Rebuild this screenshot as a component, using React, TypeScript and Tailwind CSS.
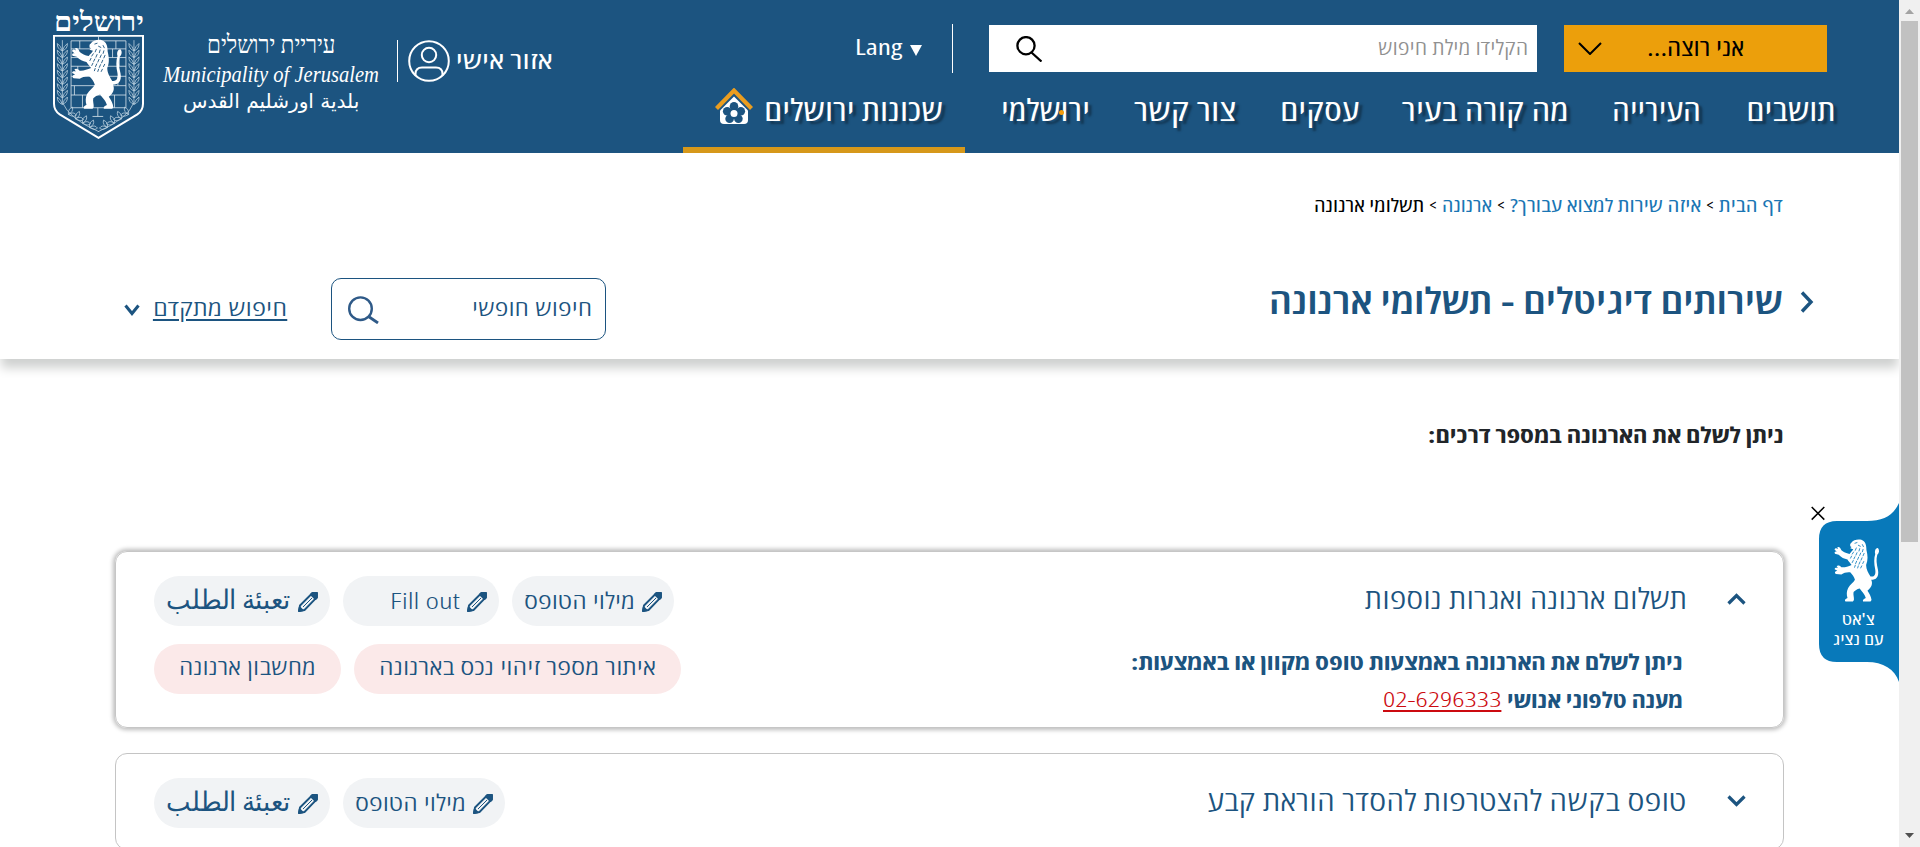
import { useLayoutEffect, useRef, useState } from "react";
import type { ReactNode } from "react";
import { clsx } from "clsx";

/* One line of text that is condensed or widened to fill the width of its box;
   the glyphs' side bearings hang one pixel outside on either side. */
function Line({ className, children, dir = "rtl" }: { className?: string; children: ReactNode; dir?: "rtl" | "ltr" }) {
  const box = useRef<HTMLSpanElement>(null);
  const text = useRef<HTMLSpanElement>(null);
  const [scale, setScale] = useState(1);
  useLayoutEffect(() => {
    if (box.current && text.current) {
      setScale((box.current.clientWidth + 2) / text.current.offsetWidth);
    }
  }, []);
  return (
    <span ref={box} dir={dir} className={clsx("flex shrink-0 justify-start whitespace-nowrap", className)}>
      <span
        ref={text}
        className={clsx("shrink-0", dir === "rtl" ? "-mr-px origin-right" : "-ml-px origin-left")}
        style={{ transform: `scaleX(${scale})` }}
      >
        {children}
      </span>
    </span>
  );
}

const LION =
  "M104 42 L108 38 C112 30 128 27 137 30 C149 34 152 46 152 60 C156 76 157 90 151 104 C151 118 158 128 164 138 C176 140 180 132 178 118 C174 100 174 84 178 72 C175 62 180 53 186 54 C191 60 190 68 184 74 C180 88 182 100 186 118 C190 140 180 148 166 148 C172 160 166 172 155 180 C160 188 166 196 167 208 L164 212 L142 212 C140 208 144 204 150 202 C148 192 138 182 132 174 C124 176 118 180 114 184 C112 192 116 200 115 208 L112 212 L90 212 C86 208 90 204 96 202 C93 192 93 182 98 172 C104 162 114 156 118 148 C116 140 110 132 104 126 C92 125 86 128 78 132 L62 131 C56 127 60 122 66 121 L58 117 C58 112 64 112 68 113 L64 108 C67 104 74 106 78 111 C88 112 98 108 108 104 C104 98 98 92 96 88 C86 86 78 82 70 74 L59 71 C56 66 60 63 65 65 L58 59 C58 54 63 53 68 57 L66 52 C70 49 75 52 78 61 C84 66 92 70 102 72 C106 66 110 64 113 58 L104 55 L108 51 L104 49 Z";

const MANE =
  "M118 40 l6 -2 M128 46 l6 3 M140 44 l3 6 M122 54 l-3 7 M132 56 l-2 7 M142 58 l-2 7 M114 66 l-4 6 M124 68 l-3 7 M135 69 l-3 7 M145 70 l-3 7 M108 78 l-3 6 M118 80 l-3 6 M129 81 l-3 7 M139 83 l-3 7 M113 91 l-3 6 M123 93 l-3 7 M133 95 l-3 7 M144 94 l-3 6 M119 105 l-2 6 M128 107 l-2 6 M138 107 l-3 6";

function Lion({ ink }: { ink: string }) {
  return (
    <>
      <path d={LION} fill="#fff" />
      <path d={MANE} fill="none" stroke={ink} strokeWidth="2.4" strokeLinecap="round" />
    </>
  );
}

const LEAVES = [128, 148, 168, 188, 208, 228, 248, 268, 288];

function Shield() {
  return (
    <svg viewBox="12 95 272 310" className="h-[104px] w-[91px]">
      <path d="M15 97H281V300Q281 320 264 332L148 402L32 332Q15 320 15 300Z" fill="#1c5480" stroke="#fff" strokeWidth="6" />
      <g fill="none" stroke="#dbe6ee" strokeWidth="2.4">
        <path d="M66 112H230M66 136H230M66 162H230M66 188H230M66 218H230M66 246H230M66 274H230M66 312H230M66 112V312M230 112V312M92 112V136M148 97V112M200 112V136M190 136V162M210 162V188M86 188V218M206 218V246M76 246V274M100 274V312M196 274V312M180 246V274M146 312V338M130 338H162" />
      </g>
      <g fill="none" stroke="#b9cfdf" strokeWidth="2.4">
        <path d="M40 110V296Q60 345 150 384M254 110V296Q236 345 146 384" />
        {LEAVES.map((y) => (
          <g key={y}>
            <path d={`M40 ${y + 14}Q24 ${y + 8} 25 ${y - 8}Q36 ${y} 40 ${y + 14}Q56 ${y + 8} 55 ${y - 8}Q44 ${y} 40 ${y + 14}`} />
            <path d={`M254 ${y + 14}Q238 ${y + 8} 239 ${y - 8}Q250 ${y} 254 ${y + 14}Q270 ${y + 8} 269 ${y - 8}Q258 ${y} 254 ${y + 14}`} />
          </g>
        ))}
        {[0, 1, 2, 3].map((i) => (
          <g key={i}>
            <path d={`M${58 + i * 21} ${332 + i * 13}q-2 -16 12 -22q4 14 -12 22q16 10 24 2q-8 -12 -24 -2`} />
            <path d={`M${238 - i * 21} ${332 + i * 13}q2 -16 -12 -22q-4 14 12 22q-16 10 -24 2q8 -12 24 -2`} />
          </g>
        ))}
      </g>
      <g transform="translate(3.6 76.5) scale(1.13 1.125)">
        <Lion ink="#1c5480" />
      </g>
    </svg>
  );
}

function Pencil() {
  return (
    <svg viewBox="0 0 20 20" className="h-5 w-5 shrink-0" fill="none" stroke="#1c5480" strokeWidth="1.9" strokeLinejoin="round">
      <path d="M1 19L2 13.500L14 1.500L18.800 1L18.500 5.700L6.500 18Z" />
      <path d="M5 15L14 6" strokeWidth="1" />
      <path d="M13 2.500L17.500 7L19 5.500V1H14.500Z" fill="#1c5480" />
      <path d="M1 19L1.700 15.500L4.600 18.400Z" fill="#1c5480" />
    </svg>
  );
}

function Chevron({ d, box, className, width = 3 }: { d: string; box: string; className: string; width?: number }) {
  return (
    <svg viewBox={box} className={clsx("shrink-0", className)} fill="none" stroke="currentColor" strokeWidth={width}>
      <path d={d} />
    </svg>
  );
}

function FormPill({ label, className, textClass, dir = "rtl" }: { label: string; className: string; textClass: string; dir?: "rtl" | "ltr" }) {
  return (
    <a className={clsx("flex h-[50px] items-center justify-end gap-[8px] rounded-[25px] bg-[#f1f3f5] pr-[12px]", className)}>
      <Line dir={dir} className={textClass}>{label}</Line>
      <span className="pt-[2px]"><Pencil /></span>
    </a>
  );
}

const hebrewPill = "w-[109px] text-[23px] leading-[44px] pb-[3px] font-[350]";
const arabicPill = "w-[123px] text-[27px] leading-[40px] pb-[5px] font-light";

function NavItem({ label, className }: { label: string; className: string }) {
  return <Line className={clsx("pt-[15px] text-[30px] leading-[42px] [text-shadow:3px_3px_2px_rgba(0,0,0,0.38)]", className)}>{label}</Line>;
}

function Header() {
  return (
    <header className="flex h-[153px] bg-[#1c5480] text-white">
      <div className="flex w-[683px] shrink-0 pl-[53px]">
        <div className="flex w-[91px] flex-col items-center pt-[5px]">
          <Line className="w-[88px] font-['Liberation_Serif',serif] text-[27px] leading-[30px] font-bold"><span className="relative top-[2px]">ירושלים</span></Line>
          <Shield />
        </div>
        <div className="ml-[20px] flex w-[214px] flex-col items-center pt-[29px]">
          <Line className="w-[126px] font-['Liberation_Serif',serif] text-[25px] leading-[32px]">עיריית ירושלים</Line>
          <Line dir="ltr" className="w-[214px] font-['Liberation_Serif',serif] text-[24px] leading-[26px] italic">Municipality of Jerusalem</Line>
          <Line className="w-[174px] font-['DejaVu_Sans',sans-serif] text-[20px] leading-[28px]">بلدية اورشليم القدس</Line>
        </div>
        <div className="mt-[40px] ml-[19px] h-[42px] w-px bg-white" />
        <svg viewBox="0 0 42 42" className="mt-[40px] ml-[10px] h-[42px] w-[42px]" fill="none" stroke="#fff" strokeWidth="2">
          <circle cx="21" cy="21" r="19.8" />
          <circle cx="21" cy="15" r="7.2" />
          <path d="M7.5 35.5V34Q7.5 27.500 14 27.5H28Q34.500 27.500 34.500 34V35.5" />
        </svg>
        <Line className="mt-[42px] ml-[7px] w-[94px] text-[24px] leading-[36px] font-medium">אזור אישי</Line>
      </div>
      <div className="flex flex-1 flex-col">
        <div className="flex h-[74px] items-start pt-[25px]">
          <div className="ml-[173px] flex h-[45px] items-center gap-[8px]">
            <Line dir="ltr" className="w-[46px] pb-[3px] text-[22px] leading-[40px]">Lang</Line>
            <svg viewBox="0 0 12 11" className="mt-[6px] h-[11px] w-3" fill="#fff"><path d="M0 0H12L6 11Z" /></svg>
          </div>
          <div className="-mt-px ml-[30px] h-[49px] w-px bg-white" />
          <div className="ml-[36px] flex h-[47px] w-[548px] items-center justify-between bg-white pr-[10px] pl-[27px]">
            <svg viewBox="0 0 26 26" className="h-[26px] w-[26px]" fill="none" stroke="#000" strokeWidth="2.3">
              <circle cx="10" cy="9.700" r="8.600" />
              <path d="M15.500 16.500L25.500 25.500" />
            </svg>
            <Line className="w-[148px] pb-[4px] text-[21px] leading-[40px] font-light text-[#909090]">הקלידו מילת חיפוש</Line>
          </div>
          <div className="ml-[27px] flex h-[47px] w-[263px] items-center bg-[#ec9f0b] pl-[14px] text-black">
            <Chevron box="0 0 24 13" d="M1 1L12 12L23 1" className="h-[13px] w-6" width={2} />
            <Line className="ml-[46px] w-[95px] pb-[3px] text-[24px] leading-[40px]">אני רוצה...</Line>
          </div>
        </div>
        <nav className="flex h-[79px]">
          <div className="flex w-[282px] border-b-[6px] border-[#d6981a] pl-[32px]">
            <svg viewBox="0 0 38 36" className="mt-[14px] mr-[12px] h-[36px] w-[38px]">
              <path d="M19 8.500L33 22.500V32Q33 36 29 36H9Q5 36 5 32V22.500Z" fill="#fff" />
              <path d="M1.500 20.500L19 2.600L36.500 20.500" fill="none" stroke="#ea9d1f" strokeWidth="4.200" />
              <g fill="#1c5480">
                <circle cx="19" cy="18.400" r="4.300" />
                <circle cx="12.200" cy="23.200" r="4.300" />
                <circle cx="25.800" cy="23.200" r="4.300" />
                <circle cx="14.600" cy="30.800" r="4.300" />
                <circle cx="23.400" cy="30.800" r="4.300" />
                <circle cx="19" cy="25.500" r="5.500" />
              </g>
              <circle cx="19" cy="25.500" r="3.500" fill="#fff" />
            </svg>
            <NavItem label="שכונות ירושלים" className="w-[177px]" />
          </div>
          <div className="relative ml-[37px]">
            <NavItem label="ירושלמי" className="w-[87px]" />
            <span className="absolute top-[36px] left-[57px] h-[5px] w-[5px] rounded-full bg-[#f59c0b]" />
          </div>
          <NavItem label="צור קשר" className="ml-[46px] w-[100px]" />
          <NavItem label="עסקים" className="ml-[46px] w-[77px]" />
          <NavItem label="מה קורה בעיר" className="ml-[45px] w-[164px]" />
          <NavItem label="העירייה" className="ml-[46px] w-[87px]" />
          <NavItem label="תושבים" className="ml-[46px] w-[88px]" />
        </nav>
      </div>
    </header>
  );
}

function TitleBand() {
  return (
    <section className="relative h-[206px] bg-white pt-[40px] text-[#1c5480] shadow-[0_10px_10px_-1px_#cfd1d0]">
      <div dir="rtl" className="flex h-6 pr-[117px] text-[18.500px] leading-6">
        <Line className="w-[62px] text-[#1a76b4]">דף הבית</Line>
        <span className="w-[20px] text-center text-[16px] text-black">&gt;</span>
        <Line className="w-[189px] text-[#1a76b4]">איזה שירות למצוא עבורך?</Line>
        <span className="w-[20px] text-center text-[16px] text-black">&gt;</span>
        <Line className="w-[48px] text-[#1a76b4]">ארנונה</Line>
        <span className="w-[20px] text-center text-[16px] text-black">&gt;</span>
        <Line className="w-[108px] text-black">תשלומי ארנונה</Line>
      </div>
      <div className="mt-[61px] flex h-[62px] items-center pr-[85px] pl-[124px]">
        <Chevron box="0 0 16 12" d="M1.500 1.500L8 9.500L14.500 1.500" className="mt-[2px] mr-[14px] h-3 w-4" />
        <Line className="w-[132px] pb-[5px] text-[23px] leading-[40px] font-[350] underline decoration-2 underline-offset-[3px]">חיפוש מתקדם</Line>
        <div className="ml-[45px] flex h-[62px] w-[275px] items-center justify-between rounded-[10px] border border-[#1c5480] pr-[14px] pl-[16px]">
          <svg viewBox="0 0 31 28" className="mt-[2px] h-7 w-[31px]" fill="none" stroke="#2f5a88" strokeWidth="2.400">
            <circle cx="12.500" cy="12.700" r="11.300" />
            <path d="M20.500 20.500L30 27" strokeWidth="2.800" />
          </svg>
          <Line className="w-[118px] pb-[5px] text-[23px] leading-[40px] font-[350]">חיפוש חופשי</Line>
        </div>
        <h1 className="ml-auto self-start pt-[2px]">
          <Line className="w-[512px] text-[36px] leading-[42px] font-semibold">שירותים דיגיטלים - תשלומי ארנונה</Line>
        </h1>
        <Chevron box="0 0 14 22" d="M2 1.500L11 11L2 20.500" className="mt-[13px] ml-[18px] h-[22px] w-[14px] self-start" width={3.4} />
      </div>
    </section>
  );
}

function Services() {
  return (
    <main className="pt-[63px] pl-[115px] text-[#1c5480]">
      <p className="flex justify-end pr-[116px]">
        <Line className="w-[354px] text-[22px] leading-6 font-bold text-[#212529]">ניתן לשלם את הארנונה במספר דרכים:</Line>
      </p>
      <article className="mt-[105px] flex h-[177px] w-[1669px] justify-between rounded-[12px] border border-[#c6c6c6] pt-[24px] pr-[37px] pl-[38px] shadow-[0_0_4px_2px_#bdbdbd]">
        <div className="flex flex-col gap-[18px]">
          <div className="flex gap-[13px]">
            <FormPill label="تعبئة الطلب" className="w-[176px]" textClass={arabicPill} />
            <FormPill label="Fill out" dir="ltr" className="w-[156px]" textClass="w-[68px] text-[22px] leading-[44px] pb-[3px] font-[350]" />
            <FormPill label="מילוי הטופס" className="w-[162px]" textClass={hebrewPill} />
          </div>
          <div className="flex gap-[13px]">
            <a className="flex h-[50px] w-[187px] justify-center rounded-[25px] bg-[#fbe9e9]">
              <Line className="w-[135px] text-[23px] leading-[44px] font-[350]">מחשבון ארנונה</Line>
            </a>
            <a className="flex h-[50px] w-[327px] justify-center rounded-[25px] bg-[#fbe9e9]">
              <Line className="w-[275px] text-[23px] leading-[44px] font-[350]">איתור מספר זיהוי נכס בארנונה</Line>
            </a>
          </div>
        </div>
        <div className="flex flex-col items-end pt-[4px]">
          <div className="flex items-center gap-[41px]">
            <Line className="w-[320px] text-[29px] leading-[36px] font-light">תשלום ארנונה ואגרות נוספות</Line>
            <Chevron box="0 0 19 12" d="M1.500 10.500L9.500 2.500L17.500 10.500" className="mt-[1px] h-3 w-[19px]" width={3.2} />
          </div>
          <div className="mt-[26px] flex flex-col items-end pr-[64px] text-[22px] leading-[38px] font-bold">
            <Line className="w-[550px]">ניתן לשלם את הארנונה באמצעות טופס מקוון או באמצעות:</Line>
            <div className="flex">
              <Line dir="ltr" className="mr-[7px] w-[117px] text-[21px] font-light text-[#cc0a10] underline decoration-2 underline-offset-[3px]">02-6296333</Line>
              <Line className="w-[174px]">מענה טלפוני אנושי</Line>
            </div>
          </div>
        </div>
      </article>
      <article className="mt-[25px] flex h-[97px] w-[1669px] justify-between rounded-[12px] border border-[#c4c4c4] pt-[24px] pr-[37px] pl-[38px]">
        <div className="flex gap-[13px]">
          <FormPill label="تعبئة الطلب" className="w-[176px]" textClass={arabicPill} />
          <FormPill label="מילוי הטופס" className="w-[162px]" textClass={hebrewPill} />
        </div>
        <div className="flex h-[43px] items-center gap-[41px]">
          <Line className="w-[478px] text-[29px] leading-[36px] font-light">טופס בקשה להצטרפות להסדר הוראת קבע</Line>
          <Chevron box="0 0 19 12" d="M1.500 1.500L9.500 9.500L17.500 1.500" className="mt-[3px] h-3 w-[19px]" width={3.2} />
        </div>
      </article>
    </main>
  );
}

function ChatTab() {
  return (
    <aside className="absolute top-[503px] left-[1811px] h-[179px] w-[88px] text-white">
      <svg viewBox="0 0 88 179" className="absolute inset-0 h-full w-full">
        <path d="M88 0C82 13 72 18 56 18H26Q8 18 8 36V141Q8 159 26 159H56C72 159 84 166 88 179Z" fill="#0879ba" />
        <path d="M.7 4L13.300 16.600M13.300 4L.7 16.600" stroke="#000" strokeWidth="1.500" fill="none" />
        <g transform="translate(4 26.700) scale(.3385)">
          <Lion ink="#0879ba" />
        </g>
      </svg>
      <div className="relative flex flex-col items-center pt-[106px] pl-[6px] text-[16px] leading-[20px]">
        <Line className="w-[31px]">צ'אט</Line>
        <Line className="w-[48px]">עם נציג</Line>
      </div>
    </aside>
  );
}

function Scrollbar() {
  return (
    <div className="flex w-[21px] shrink-0 flex-col items-center bg-[#f0f0f0]">
      <svg viewBox="0 0 9 5" className="mt-[9px] h-[5px] w-[9px]" fill="#a3a3a3"><path d="M0 5H9L4.500 0Z" /></svg>
      <div className="mt-[7px] h-[521px] w-[17px] bg-[#c1c1c1]" />
      <svg viewBox="0 0 9 5" className="mt-auto mb-[9px] h-[5px] w-[9px]" fill="#505050"><path d="M0 0H9L4.500 5Z" /></svg>
    </div>
  );
}

export default function App() {
  return (
    <div className="relative flex h-[847px] w-[1920px] overflow-hidden bg-white font-['Open_Sans',sans-serif] [font-stretch:85%]">
      <div className="h-full w-[1899px] overflow-hidden">
        <Header />
        <TitleBand />
        <Services />
      </div>
      <Scrollbar />
      <ChatTab />
    </div>
  );
}
